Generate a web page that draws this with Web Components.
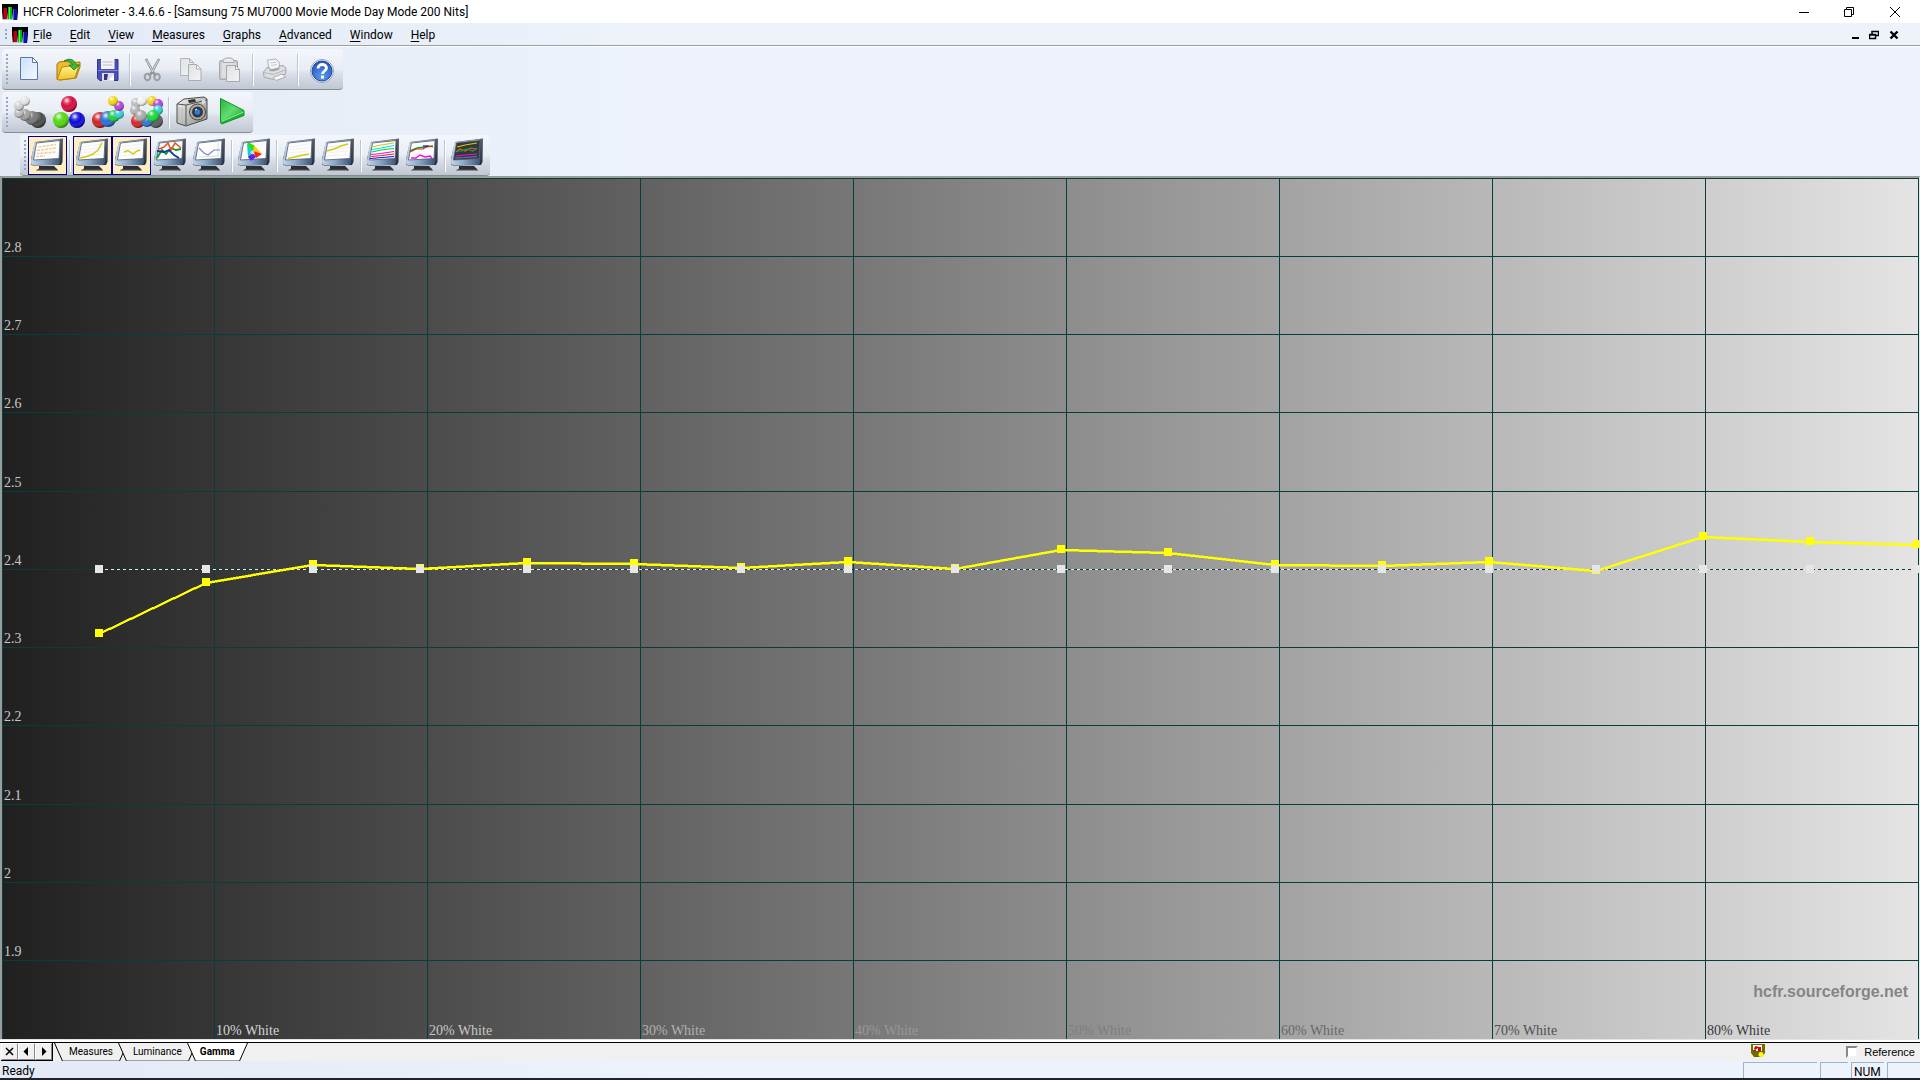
<!DOCTYPE html>
<html lang="en">
<head>
<meta charset="utf-8">
<title>HCFR Colorimeter</title>
<style>
html, body { height: 100%; margin: 0; }
body { font-family: Roboto, "Open Sans", sans-serif; font-size: 12px; color: #000; overflow: hidden; }
</style>
</head>
<body>
<hc-app></hc-app>
<script>
const LOGO = `<svg width="16" height="16" viewBox="0 0 16 16"><defs><linearGradient id="k" x2="0" y2="1"><stop offset="0"/><stop offset=".45" stop-color="#000"/><stop offset="1" stop-color="#c9d2dc"/></linearGradient></defs><rect width="16" height="16" fill="url(#k)"/><rect x="1" y="4" width="4" height="11" fill="#c00010"/><rect x="1" y="4" width="1" height="11" fill="#600"/><rect x="6" y="3" width="4" height="12" fill="#0b0"/><rect x="7" y="3" width="1" height="12" fill="#5f5"/><rect x="11" y="5" width="4" height="11" fill="#0a10b0"/><rect x="11" y="5" width="1" height="11" fill="#46e"/></svg>`;

const DEFS = `<defs>
<linearGradient id="paper" x2="1" y2="1"><stop offset="0" stop-color="#cfe0fb"/><stop offset="1" stop-color="#f2f8ff"/></linearGradient>
<linearGradient id="grayPaper" x2="1" y2="1"><stop offset="0" stop-color="#dfe1e4"/><stop offset="1" stop-color="#f4f4f5"/></linearGradient>
<linearGradient id="gold" x2="0" y2="1"><stop offset="0" stop-color="#fff6a0"/><stop offset="1" stop-color="#f5c21c"/></linearGradient>
<radialGradient id="help" cx=".5" cy=".8" r=".8"><stop offset="0" stop-color="#5b9af0"/><stop offset="1" stop-color="#2453b8"/></radialGradient>
<linearGradient id="bezel" x2="1" y2="1"><stop offset="0" stop-color="#dde9f4"/><stop offset=".5" stop-color="#9db8d4"/><stop offset="1" stop-color="#31455f"/></linearGradient>
<linearGradient id="side" x2="0" y2="1"><stop offset="0" stop-color="#59616c"/><stop offset="1" stop-color="#232c3a"/></linearGradient>
<linearGradient id="chin" x2="1" y2="0"><stop offset="0" stop-color="#c3d5e6"/><stop offset=".45" stop-color="#86a5c6"/><stop offset="1" stop-color="#3c5270"/></linearGradient>
<linearGradient id="play" x2="1" y2="1"><stop offset="0" stop-color="#27b53c"/><stop offset=".5" stop-color="#62dc70"/><stop offset="1" stop-color="#12a52a"/></linearGradient>
<linearGradient id="body" x2="1" y2="1"><stop offset="0" stop-color="#f4f4f4"/><stop offset="1" stop-color="#8a8a86"/></linearGradient>
<radialGradient id="gloss" cx=".36" cy=".28" r=".7"><stop offset="0" stop-color="#fff" stop-opacity=".95"/><stop offset=".3" stop-color="#fff" stop-opacity=".2"/><stop offset=".55" stop-color="#fff" stop-opacity="0"/><stop offset="1" stop-color="#000" stop-opacity=".4"/></radialGradient>
</defs>`;

const balls = list => list.map(([x, y, r, c]) => `<circle cx="${x}" cy="${y}" r="${r}" fill="${c}"/><circle cx="${x}" cy="${y}" r="${r}" fill="url(#gloss)"/>`).join('');

const monitor = (content, screen = '#fdfdfd') => `
<path d="M11 30h15l3 3 1 1.500H8l3-2z" fill="#2c2f35"/><path d="M8 34.300h20" stroke="#8b929b"/>
<path d="M7 6 31 3 35 2.500 34.500 26 33 29 5 29.500 3 28.500 3 23z" fill="url(#side)"/>
<path d="M6.500 6.500 32 3.500 31.500 28 29 29 5 29 3 28 3 23.500z" fill="url(#bezel)"/>
<path d="M3.500 23.500 31 22 32.500 22 31.500 28 29 29 5 29 3.500 28z" fill="url(#chin)"/>
<path d="M8.500 7 32 4.500 31 22.500 5.500 24z" fill="${screen}" stroke="#4d5b6d" stroke-width=".8"/>${content}`;
const stroke = (d, c, w = 1.2) => `<path d="${d}" fill="none" stroke="${c}" stroke-width="${w}"/>`;
const faint = stroke('M9 11 29 8M8 14 29 11.500M8 17 29 15M7 20 29 18.500', '#ececec', .7);

const ICONS = {
  new: `<path d="M10.500 7.500h12l5 5v17h-17z" fill="url(#paper)" stroke="#5577aa"/><path d="M22.500 7.500v5h5z" fill="#fff" stroke="#5577aa"/>`,
  open: `<path d="M8 14v15l3 1 16-2 4-11V12l-10 1-3-2-8 1z" fill="#eebd27" stroke="#a37506"/><path d="M8 29.500 13 17l17-2-4 13-15 2z" fill="url(#gold)" stroke="#b3860c"/><path d="M15 11c6-4 11-1 12 4h3.500L25 20l-5-5h3.500c-1-3-4-5-8.500-4z" fill="#36bd3a" stroke="#0e7a1a" stroke-width=".8"/>`,
  save: `<path d="M9.500 9.500h20.500v21H12l-2.500-2z" fill="#4a4fb8" stroke="#30358f"/><path d="M13 9h13.500v10H13z" fill="#f3f3f5"/><path d="M14.500 12h10M14.500 15h10" stroke="#b9bcc5"/><path d="M10 20.500h20" stroke="#7f85dc"/><path d="M14 23h12v8H14z" fill="#dcdde6"/><path d="M16 24h4l-1 6h-3z" fill="#34357d"/><path d="M21 30 26 24v6z" fill="#fff"/>`,
  cut: `<path d="M13 9 20 22l3 4M26 9 19 22l-3 4" stroke="#8f949c" stroke-width="2.600" fill="none"/><path d="M13.500 10 20 22M25.500 10 19 22" stroke="#d8dbe0" stroke-width="1"/><ellipse cx="14.500" cy="27" rx="2.800" ry="3.300" fill="none" stroke="#999da4" stroke-width="2"/><ellipse cx="24" cy="27" rx="2.800" ry="3.300" fill="none" stroke="#999da4" stroke-width="2"/>`,
  copy: `<path d="M8.500 8.500h9l4 4v13h-13z" fill="url(#grayPaper)" stroke="#b2b5ba"/><path d="M17.500 8.500v4h4" fill="none" stroke="#b2b5ba"/><path d="M16.500 14.500h8l4.500 4.500v11.500H16.500z" fill="url(#grayPaper)" stroke="#a9acb2"/><path d="M24.500 14.500v4.500H29z" fill="#fff" stroke="#a9acb2"/>`,
  paste: `<rect x="8.500" y="10.500" width="18" height="19" rx="1.500" fill="#c7c9cd" stroke="#a5a8ae"/><path d="M10.500 12.500h14v15h-14z" fill="#dddfe2"/><path d="M12 12.500V10l3-2h5l3 2v2.500z" fill="#e8e9eb" stroke="#a5a8ae"/><path d="M15.500 15.500h9l4 4v12h-13z" fill="url(#grayPaper)" stroke="#a5a8ae"/><path d="M24.500 15.500v4h4z" fill="#fff" stroke="#a5a8ae"/>`,
  print: `<path d="M13 20 11.500 10 20 9l3 3 1 9z" fill="#f3f4f5" stroke="#aeb1b6"/><path d="M14.500 13l6-1M15 15.500l6-1" stroke="#c9ccd0"/><path d="M7.500 22 11 17.500l3 .5v3l9-2v-3l4-.5 3 2.500-.5 6L17 29.500 8 27z" fill="#dcdee1" stroke="#a2a6ad"/><path d="M8 22.500 17 24.500 29.500 20" fill="none" stroke="#b3b6bb"/><path d="M14 19.500l9-2v2l-6 2z" fill="#9fa4aa"/><path d="M17 27.500l9-3.500 3.500 3-9.500 3.500z" fill="#f8f8f9" stroke="#a9adb3"/>`,
  help: `<circle cx="21" cy="21" r="11.500" fill="#fff" stroke="#8fa0bf"/><circle cx="21" cy="21" r="10" fill="url(#help)" stroke="#1c479f"/><path d="M17 18.500c0-5.500 8.500-5 8.500-.5 0 3-4 3-4 6" fill="none" stroke="#fff" stroke-width="2.800"/><rect x="20" y="25.500" width="3" height="3" fill="#fff"/>`,
  grays: balls([[28,27,8,'#4b4b4b'],[22,25,7,'#777'],[15,22,6,'#9f9f9f'],[9,20,5,'#bcbcbc'],[9,13,5,'#cfcfcf'],[15,8,5,'#e2e2e2']]),
  primaries: balls([[20,11,8,'#dc0a3c'],[12,27,8,'#50d80c'],[28,27,8,'#0a08dc']]),
  scale: balls([[12,27,8,'#d42020'],[20,26,8,'#2670d8'],[26,23,6,'#20d040'],[31,21,5,'#32cfcc'],[31,13,5,'#b840dc'],[25,8,5,'#f2d414']]),
  ring: balls([[11,28,7,'#d82424'],[29,28,7,'#5d5d5d'],[20,28,6,'#2a76d8'],[9,10,5,'#bcbcbc'],[8,17,5,'#b5b5b5'],[15,8,5,'#eee'],[25,8,5,'#f2d414'],[31,11,5,'#b840dc'],[31,17,5,'#32cfcc'],[26,23,6,'#18d838'],[14,23,6,'#a9a9a9']]),
  camera: `<path d="M5 11 12 6l20-2 3 2v20l-21 7-9-3z" fill="url(#body)" stroke="#4b4b4b"/><path d="M5 11 14 12 35 7M14 12v20" fill="none" stroke="#55554f" stroke-width="1"/><path d="M7 14v14M10 15v15" stroke="#b5b5b5"/><path d="M16 7l7-1 1 3-7 1z" fill="#333"/><circle cx="25.500" cy="19" r="8" fill="#a9aaa9" stroke="#444"/><circle cx="25.500" cy="19" r="5.500" fill="#333840"/><circle cx="25.500" cy="19" r="2.800" fill="#2b7dde"/><path d="M23 17l2-1" stroke="#fff"/><path d="M30 7h3v3l-3 1z" fill="#dedede"/>`,
  play: `<path d="M9.500 5.500 33 17.500v5L10.500 31l-1-2z" fill="#19b52e" stroke="#109022"/><path d="M10 6 32.500 18 10 28z" fill="url(#play)"/><path d="M10.500 28.500 32.500 19" stroke="#9df0a4"/>`,
  table: monitor(`<path d="M10.500 11 28 8.500M9 14.500 28 12M8.500 17.500 28 16M8 20.500 17 20" fill="none" stroke="#efcf9f" stroke-width="1.600" stroke-dasharray="3 1"/>`),
  gammaCurve: monitor(faint + stroke('M7 22 14 20.500 20 18 25 14 29 7', '#d0cc10', 1.500)),
  gammaWave: monitor(faint + stroke('M12 16 16 14.500 21 18 25 15 28 14', '#d0cc10', 1.500)),
  rgb: monitor(stroke('M6 22 11 14 15 18 20 12 25 14 30 13', '#0a9a28', 1.800) + stroke('M8 13 13 11 17 7 20 14 24 7 30 12', '#ee5523', 1.600) + stroke('M6 15 13 16 18 14 23 19 28 22', '#123a9c', 1.800)),
  temp: monitor(stroke('M28 7V20M9 21 29 20', '#cde6cd', 1) + stroke('M9 12 14 17 18 19 24 14 30 14', '#8480d8', 1.200)),
  cie: monitor(`<path d="M12 8 14 6.500 20 10 18 17z" fill="#20e800"/><path d="M12 8 18 15 17 24 13 21z" fill="#19cfc5"/><path d="M19 9 27 18 18 17z" fill="#ffcf14"/><path d="M18 15 27 18 21 22z" fill="#f52424"/><path d="M13 21 18 17 21 21 16 25z" fill="#6420e8"/><circle cx="17.500" cy="16.500" r="2" fill="#fff" opacity=".6"/>`),
  nearBlack: monitor(faint + stroke('M8 22.500 15 21 21 19.500 29 18', '#d0cc10', 1.500)),
  nearWhite: monitor(faint + stroke('M8 15 15 13 22 10 29 8', '#d0cc10', 1.500)),
  lumas: monitor(stroke('M8 11 17 9 30 7', '#d0cc10') + stroke('M8 13.500 17 12 30 9.500', '#00e4e4') + stroke('M8 16 17 14 30 12.500', '#00d828') + stroke('M7 18.500 17 17.500 30 15.500', '#f00ce0') + stroke('M7 20.500 18 19.500 30 18', '#f02020') + stroke('M6 22.500 18 21.500 30 20.500', '#1010e0')),
  sats: monitor(stroke('M7 15 14 12 22 11 30 10', '#00a828', 1.600) + stroke('M7 16 13 13 20 13 25 10 30 11', '#f02020') + stroke('M20 10h5', '#1010e0') + stroke('M8 22 13 22 17 19 22 21 27 20 29 22', '#f00ce0', 1.500)),
  all: monitor(stroke('M9 11 17 9 29 7', '#d0cc10') + stroke('M8 16 12 13 17 15 23 12 29 13', '#e65a28') + stroke('M8 15 14 15 19 13 25 15 29 12', '#159c3c') + stroke('M8 20 17 19 29 18', '#e814dc') + stroke('M7 22 17 21.500 29 20.500', '#7474cc'), '#33363a')
};

function define(name, html, setup) {
  const template = document.createElement('template');
  template.innerHTML = html;
  customElements.define(name, class extends HTMLElement {
    constructor() {
      super();
      this.attachShadow({ mode: 'open' }).append(template.content.cloneNode(true));
    }
    connectedCallback() { if (setup) setup(this, this.shadowRoot); }
  });
}

define('hc-logo', `<style>:host{display:block;width:16px;height:16px}svg{display:block}</style>${LOGO}`);

define('hc-title-bar', `<style>
:host{display:flex;align-items:center;height:23px;background:#fff;padding-left:2px}
h1{flex:1;margin:0 0 0 5px;font-size:12px;line-height:22px;font-weight:400}
button{width:46px;height:23px;border:0;padding:0;background:none}
svg{display:block;margin:auto}
.controls{display:flex;padding-right:2px}
</style>
<hc-logo></hc-logo><h1><slot></slot></h1>
<div class="controls">
<button aria-label="Minimize"><svg width="12" height="12"><path d="M2 6.500h10" stroke="#000"/></svg></button>
<button aria-label="Restore"><svg width="12" height="12" fill="none" stroke="#000"><path d="M1.500 3.500h7v7h-7zM3.500 3.500v-2h7v7h-2"/></svg></button>
<button aria-label="Close"><svg width="12" height="12" stroke="#000"><path d="M1 1l10 10M11 1 1 11"/></svg></button>
</div>`);

define('hc-grip', `<style>:host{display:block;width:2px;background:repeating-linear-gradient(#93a8c4 0 2px,transparent 2px 4px)}</style>`);

define('hc-menu-item', `<style>:host{display:block}button{border:0;background:none;padding:0;font:inherit;line-height:20px;color:inherit}u{text-underline-offset:2px}</style><button><u></u><span></span></button>`,
  (el, root) => {
    root.querySelector('u').textContent = el.getAttribute('label')[0];
    root.querySelector('span').textContent = el.getAttribute('label').slice(1);
  });

define('hc-menu-bar', `<style>
:host{display:flex;align-items:center;height:20px;padding-top:2px;border-bottom:1px solid #9a9da2;box-shadow:0 1px #fff;padding-left:5px}
hc-grip{height:12px;margin-right:5px}
nav{display:flex;gap:18px;margin-left:5px;flex:1}
.controls{display:flex;padding-right:16px}
.controls button{width:20px;height:20px;padding:0;border:0;background:none}
svg{display:block;margin:auto}
</style>
<hc-grip></hc-grip><hc-logo></hc-logo><nav><slot></slot></nav>
<div class="controls">
<button aria-label="Minimize document"><svg width="10" height="10"><path d="M3 8h7" stroke="#000" stroke-width="2"/></svg></button>
<button aria-label="Restore document"><svg width="10" height="10" fill="none" stroke="#000"><path d="M.5 4.500h6v4h-6zM.5 5h6M3 4V1.500h6.500v4H7M3 1.500h6.500" stroke-width="1.500"/></svg></button>
<button aria-label="Close document"><svg width="10" height="10"><path d="M1.500 1.500l7 7M8.500 1.500l-7 7" stroke="#000" stroke-width="2.400"/></svg></button>
</div>`);

define('hc-tool-bar', `<style>
:host{display:flex;align-self:flex-start;box-sizing:border-box;height:41px;padding:1px 3px 0 4px;border-bottom:1px solid #858c96;border-radius:4px;background:linear-gradient(#f3f6fb,#e9edf4 50%,#d9dfe8 62%,#c0c8d2)}
hc-grip{height:31px;margin:4px 2px 0 0}
</style><hc-grip></hc-grip><slot></slot>`);

define('hc-tool-gap', `<style>:host{display:block;width:2px;height:32px;margin:4px 2px;background:linear-gradient(90deg,#bcc6d2 50%,#fff 50%)}</style>`);

define('hc-tool', `<style>
:host{display:block;width:39px;height:39px}
button{display:block;width:39px;height:39px;padding:0;border:0;background:none}
svg{display:block}
:host([pressed]) button{background:#ffeec2;box-shadow:inset 0 0 0 1px #000080}
</style><button><svg width="39" height="39" viewBox="0 0 39 39"></svg></button>`,
  (el, root) => {
    const name = el.getAttribute('icon');
    root.querySelector('svg').innerHTML = DEFS + ICONS[name];
    root.querySelector('button').setAttribute('aria-label', name);
  });

define('hc-gamma-chart', `<style>
:host{display:block;flex:1;min-height:0;border:solid #9c9c9c;border-width:2px 1px 0 2px;border-right-color:#e6e6e6;overflow:hidden;background:linear-gradient(90deg,#202020,#e4e4e4)}
svg{display:block;width:100%;height:100%}
.tick{font:14px "Liberation Serif",serif}
.site{font:bold 16px "Liberation Sans",sans-serif;fill:#858585;text-anchor:end}
</style><svg></svg>`,
  (el, root) => {
    const svg = root.querySelector('svg');
    const gamma = [2.318, 2.383, 2.406, 2.401, 2.409, 2.408, 2.403, 2.410, 2.401, 2.426, 2.422, 2.406, 2.405, 2.410, 2.399, 2.442, 2.436, 2.432];
    const shades = ['#d4d4d4', '#c8c8c8', '#b0b0b0', '#989898', '#7f7f7f', '#686868', '#505050', '#383838'];
    const draw = () => {
      const w = el.clientWidth, h = el.clientHeight;
      const columnX = n => Math.floor(n * (w - 1) / 9);
      const valueY = v => Math.floor((2.9 - v) / 1.1 * h + .01);
      const pointX = n => Math.round(97 + n * (w - 99) / 17);
      let lines = '', labels = '';
      for (let n = 0; n <= 9; n++) {
        const x = columnX(n);
        lines += `M${x + .5} 0V${h}`;
        if (n > 0 && n < 9) labels += `<text class="tick" x="${x + 2}" y="${h - 4}" fill="${shades[n - 1]}">${n * 10}% White</text>`;
      }
      lines += `M0 .5H${w}`;
      for (let n = 28; n >= 19; n--) {
        const y = valueY(n / 10);
        lines += `M0 ${y + .5}H${w}`;
        labels += `<text class="tick" x="2" y="${y - 4}" fill="#c8c8c8">${n / 10}</text>`;
      }
      const pts = gamma.map((v, n) => [pointX(n), valueY(v)]);
      const base = valueY(2.4);
      const ribbon = [...pts, ...pts.map(([x, y]) => [x, y + 2]).reverse()];
      svg.innerHTML = `<path d="${lines}" stroke="#063e3e" shape-rendering="crispEdges"/>${labels}
<text class="site" x="${w - 11}" y="${h - 42}">hcfr.sourceforge.net</text>
<g shape-rendering="crispEdges"><path d="M${pts[0][0]} ${base + .5}H${w - 3}" stroke="#e6e6e6" stroke-dasharray="3 3"/>
<polygon points="${ribbon.map(p => p.join()).join(' ')}" fill="#ff0" stroke="#ff0" stroke-width=".5"/>
<g fill="#ff0">${pts.map(([x, y]) => `<rect x="${x - 4}" y="${y - 4}" width="8" height="8"/>`).join('')}</g>
<g fill="#e6e6e6">${pts.map(([x]) => `<rect x="${x - 4}" y="${base - 4}" width="8" height="8"/>`).join('')}</g></g>`;
    };
    draw();
    new ResizeObserver(draw).observe(el);
  });

define('hc-tab', `<style>
:host{display:flex;height:18px;margin-right:-10px;font-family:Roboto,sans-serif;font-size:10px;--face:#f0f0f0}
:host([selected]){font-weight:700;--face:#fff}
button{border:0;border-bottom:1px solid #a0a0a0;background:var(--face);padding:0 6px;font:inherit;line-height:17px;color:#000}
:host([selected]) button{padding:0 4px}
svg{display:block}
</style>
<svg width="9" height="18"><path d="M.5 0 8.500 18H9V0z" fill="var(--face)"/><path d="M.5 0 8.500 18" stroke="#000"/></svg>
<button><slot></slot></button>
<svg width="9" height="18"><path d="M8.500 0 .5 18H0V0z" fill="var(--face)"/><path d="M8.500 0 .5 18" stroke="#000"/></svg>`);

define('hc-tab-bar', `<style>
:host{display:flex;height:18px;background:#f0f0f0;border-top:1px solid #000;box-shadow:0 -1px #fff,0 -2px #fff,0 -3px #e4e4e4;margin-top:3px;padding:0 5px 0 1px}
.nav{display:flex;margin-right:1px;border-right:1px solid #000;border-bottom:1px solid #000}
.nav button{width:17px;height:17px;padding:0;border:1px solid;border-color:#fff #888 #888 #fff;background:#f0f0f0}
.nav svg{display:block;margin:auto}
.tabs{display:flex;flex:1}
.badge{margin:0 81px 0 0}
label{display:flex;align-items:center;gap:6px;font:11px/18px "Liberation Sans",sans-serif}
input{appearance:none;width:12px;height:12px;margin:0;background:#fff;border:2px solid;border-color:#888 #f4f4f4 #f4f4f4 #888}
</style>
<div class="nav">
<button aria-label="Close"><svg width="9" height="9"><path d="M1 1l7 7M8 1 1 8" stroke="#000" stroke-width="1.500"/></svg></button>
<button aria-label="Previous"><svg width="9" height="9"><path d="M6 0v9L1.500 4.500z"/></svg></button>
<button aria-label="Next"><svg width="9" height="9"><path d="M3 0v9l4.500-4.500z"/></svg></button>
</div>
<div class="tabs"><slot></slot></div>
<svg class="badge" width="14" height="15"><path d="M0 1h14v9l-3 4H3L0 10z" fill="#6c6c00"/><path d="M2 2h9v6H2z" fill="#fff"/><path d="M3 6c1-4 3-3 4-2h3v4H7V5L4 7zM2 7h3v1H2z" fill="#e00000"/><path d="M6 9l4 2-4 3z" fill="#6c6c00"/><circle cx="10" cy="11.500" r="2.500" fill="#ff0"/></svg>
<label><input type="checkbox">Reference</label>`);

define('hc-status-bar', `<style>
:host{display:flex;height:17px;border-bottom:2px solid #20232b;line-height:21px;gap:3px}
.message{flex:1;padding-left:2px}
.pane{box-sizing:border-box;height:16px;margin-top:1px;border:solid #9ab3cf;border-width:1px 0 0 1px;line-height:18px;padding-left:2px}
.wide{width:74px}.small{width:28px}.key{width:33px}
</style><div class="message"><slot></slot></div><div class="pane wide"></div><div class="pane small"></div><div class="pane key">NUM</div><div class="pane key"></div>`);

define('hc-app', `<style>
:host{display:flex;flex-direction:column;height:100vh;background:linear-gradient(90deg,#e3eaf6,#e8eff8 400px,#eef3fb 700px)}
.bars{display:flex;flex-direction:column;gap:2px;padding:3px 0 0 2px}
.views{margin-left:18px}
</style>
<hc-title-bar>HCFR Colorimeter - 3.4.6.6 - [Samsung 75 MU7000 Movie Mode Day Mode 200 Nits]</hc-title-bar>
<hc-menu-bar><hc-menu-item label="File"></hc-menu-item><hc-menu-item label="Edit"></hc-menu-item><hc-menu-item label="View"></hc-menu-item><hc-menu-item label="Measures"></hc-menu-item><hc-menu-item label="Graphs"></hc-menu-item><hc-menu-item label="Advanced"></hc-menu-item><hc-menu-item label="Window"></hc-menu-item><hc-menu-item label="Help"></hc-menu-item></hc-menu-bar>
<div class="bars">
<hc-tool-bar><hc-tool icon="new"></hc-tool><hc-tool icon="open"></hc-tool><hc-tool icon="save"></hc-tool><hc-tool-gap></hc-tool-gap><hc-tool icon="cut"></hc-tool><hc-tool icon="copy"></hc-tool><hc-tool icon="paste"></hc-tool><hc-tool-gap></hc-tool-gap><hc-tool icon="print"></hc-tool><hc-tool-gap></hc-tool-gap><hc-tool icon="help"></hc-tool></hc-tool-bar>
<hc-tool-bar><hc-tool icon="grays"></hc-tool><hc-tool icon="primaries"></hc-tool><hc-tool icon="scale"></hc-tool><hc-tool icon="ring"></hc-tool><hc-tool-gap></hc-tool-gap><hc-tool icon="camera"></hc-tool><hc-tool icon="play"></hc-tool></hc-tool-bar>
<hc-tool-bar class="views"><hc-tool icon="table" pressed></hc-tool><hc-tool-gap></hc-tool-gap><hc-tool icon="gammaCurve" pressed></hc-tool><hc-tool icon="gammaWave" pressed></hc-tool><hc-tool icon="rgb"></hc-tool><hc-tool icon="temp"></hc-tool><hc-tool-gap></hc-tool-gap><hc-tool icon="cie"></hc-tool><hc-tool-gap></hc-tool-gap><hc-tool icon="nearBlack"></hc-tool><hc-tool icon="nearWhite"></hc-tool><hc-tool-gap></hc-tool-gap><hc-tool icon="lumas"></hc-tool><hc-tool icon="sats"></hc-tool><hc-tool-gap></hc-tool-gap><hc-tool icon="all"></hc-tool></hc-tool-bar>
</div>
<hc-gamma-chart></hc-gamma-chart>
<hc-tab-bar><hc-tab>Measures</hc-tab><hc-tab>Luminance</hc-tab><hc-tab selected>Gamma</hc-tab></hc-tab-bar>
<hc-status-bar>Ready</hc-status-bar>`);
</script>
</body>
</html>
